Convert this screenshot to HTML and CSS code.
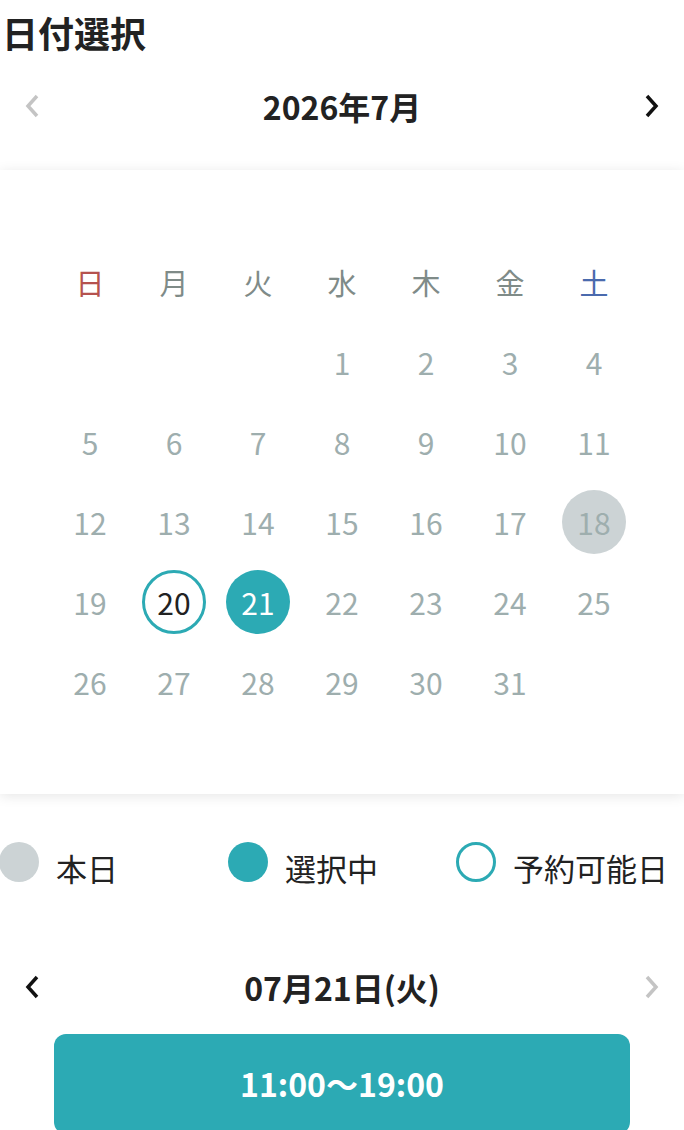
FILE: index.html
```html
<!DOCTYPE html>
<html lang="ja">
<head>
<meta charset="UTF-8">
<meta name="viewport" content="width=device-width, initial-scale=1.0">
<title>日付選択</title>
<link rel="stylesheet" href="styles.css">
</head>
<body>
    <h1 class="page-title">日付選択</h1>

    <div class="month-nav">
        <svg class="chevron disabled" viewBox="0 0 18 26" width="18" height="26"><polyline points="13,3 4,13 13,23"/></svg>
        <div class="month-label">2026年7月</div>
        <svg class="chevron" viewBox="0 0 18 26" width="18" height="26"><polyline points="5,3 14,13 5,23"/></svg>
    </div>

    <div class="calendar">
        <div class="cal-grid">
            <div class="weekday sun">日</div>
            <div class="weekday">月</div>
            <div class="weekday">火</div>
            <div class="weekday">水</div>
            <div class="weekday">木</div>
            <div class="weekday">金</div>
            <div class="weekday sat">土</div>

            <div class="day"></div><div class="day"></div><div class="day"></div>
            <div class="day"><span>1</span></div>
            <div class="day"><span>2</span></div>
            <div class="day"><span>3</span></div>
            <div class="day"><span>4</span></div>

            <div class="day"><span>5</span></div>
            <div class="day"><span>6</span></div>
            <div class="day"><span>7</span></div>
            <div class="day"><span>8</span></div>
            <div class="day"><span>9</span></div>
            <div class="day"><span>10</span></div>
            <div class="day"><span>11</span></div>

            <div class="day"><span>12</span></div>
            <div class="day"><span>13</span></div>
            <div class="day"><span>14</span></div>
            <div class="day"><span>15</span></div>
            <div class="day"><span>16</span></div>
            <div class="day"><span>17</span></div>
            <div class="day"><span class="today">18</span></div>

            <div class="day"><span>19</span></div>
            <div class="day"><span class="available">20</span></div>
            <div class="day"><span class="selected">21</span></div>
            <div class="day"><span>22</span></div>
            <div class="day"><span>23</span></div>
            <div class="day"><span>24</span></div>
            <div class="day"><span>25</span></div>

            <div class="day"><span>26</span></div>
            <div class="day"><span>27</span></div>
            <div class="day"><span>28</span></div>
            <div class="day"><span>29</span></div>
            <div class="day"><span>30</span></div>
            <div class="day"><span>31</span></div>
            <div class="day"></div>
        </div>
    </div>

    <div class="legend">
        <div class="legend-item"><span class="dot dot-today"></span><span class="legend-text">本日</span></div>
        <div class="legend-item"><span class="dot dot-selected"></span><span class="legend-text">選択中</span></div>
        <div class="legend-item"><span class="dot dot-available"></span><span class="legend-text">予約可能日</span></div>
    </div>

    <div class="day-nav">
        <svg class="chevron" viewBox="0 0 18 26" width="18" height="26"><polyline points="13,3 4,13 13,23"/></svg>
        <div class="day-label">07月21日(火)</div>
        <svg class="chevron disabled" viewBox="0 0 18 26" width="18" height="26"><polyline points="5,3 14,13 5,23"/></svg>
    </div>

    <button class="time-slot">11:00〜19:00</button>
</body>
</html>
```

FILE: styles.css
```css
body {
    margin: 0;
    font-family: "Noto Sans CJK JP", "Noto Sans", sans-serif;
    color: #222;
    background: #fff;
    overflow: hidden;
}
.page-title {
    margin: 0;
    padding: 8px 0 0 2px;
    font-size: 36px;
    line-height: 48px;
    font-weight: 700;
}
.month-nav,
.day-nav {
    display: flex;
    justify-content: space-between;
    align-items: center;
    padding: 0 24px;
}
.month-nav {
    height: 100px;
    margin-bottom: 14px;
}
.month-label,
.day-label {
    font-size: 32px;
    font-weight: 700;
}
.chevron {
    fill: none;
    stroke: #111;
    stroke-width: 3.5;
}
.chevron.disabled {
    stroke: #c4c4c4;
}
.calendar {
    box-shadow: 0 2px 12px rgba(0, 0, 0, 0.1);
    padding: 72px 48px 72px;
}
.cal-grid {
    display: grid;
    grid-template-columns: repeat(7, 84px);
    grid-auto-rows: 80px;
}
.weekday,
.day {
    display: flex;
    justify-content: center;
    align-items: center;
    font-size: 29px;
}
.weekday {
    color: #7f8b88;
}
.weekday.sun {
    color: #b5524e;
}
.weekday.sat {
    color: #4a6aad;
}
.day span {
    display: flex;
    justify-content: center;
    align-items: center;
    width: 64px;
    height: 64px;
    border-radius: 50%;
    box-sizing: border-box;
    color: #9eaeae;
    font-size: 30px;
}
.day .today {
    background: #ccd3d5;
}
.day .available {
    border: 3px solid #2caab4;
    color: #222;
}
.day .selected {
    background: #2caab4;
    color: #fff;
}
.legend {
    display: grid;
    grid-template-columns: repeat(3, 228px);
    margin-top: 48px;
}
.legend-item {
    display: flex;
    align-items: center;
    font-size: 31px;
    height: 40px;
}
.legend-text {
    padding-top: 10px;
}
.dot {
    flex: none;
    width: 40px;
    height: 40px;
    border-radius: 50%;
    box-sizing: border-box;
    margin-right: 17px;
}
.legend-item:first-child .dot {
    margin-left: -1px;
}
.dot-today {
    background: #ccd3d5;
}
.dot-selected {
    background: #2caab4;
}
.dot-available {
    border: 3px solid #2caab4;
}
.day-nav {
    height: 60px;
    margin-top: 75px;
}
.time-slot {
    display: block;
    width: 576px;
    height: 100px;
    margin: 17px 54px 0;
    border: none;
    border-radius: 12px;
    background: #2caab4;
    color: #fff;
    font-family: inherit;
    font-size: 32px;
    font-weight: 700;
    padding-bottom: 4px;
}
```
